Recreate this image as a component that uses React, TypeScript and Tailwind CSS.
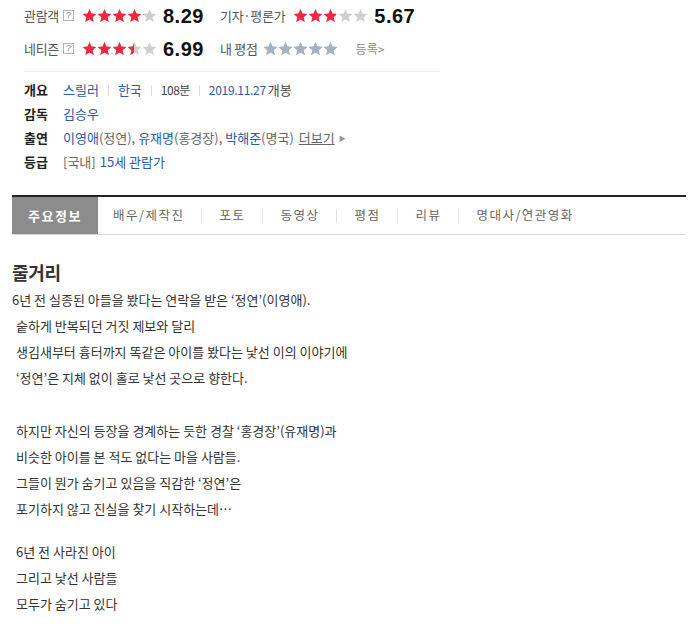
import React from "react";

const KR = { fontFamily: '"Noto Sans CJK KR", "Noto Sans", sans-serif' };

function Star({ fill, color, bg }: { fill: number; color: string; bg: string }) {
  return (
    <span className="relative inline-block w-[15px] h-[15px]">
      <svg viewBox="0 0 24 24" className="absolute inset-0 w-[15px] h-[15px]">
        <path d="M12 1.5l3.1 7.2 7.8.7-5.9 5.2 1.8 7.6L12 18.2l-6.8 4 1.8-7.6-5.9-5.2 7.8-.7z" fill={bg} />
      </svg>
      {fill > 0 && (
        <span className="absolute left-0 top-0 h-[15px] overflow-hidden" style={{ width: `${fill * 15}px` }}>
          <svg viewBox="0 0 24 24" className="w-[15px] h-[15px]">
            <path d="M12 1.5l3.1 7.2 7.8.7-5.9 5.2 1.8 7.6L12 18.2l-6.8 4 1.8-7.6-5.9-5.2 7.8-.7z" fill={color} />
          </svg>
        </span>
      )}
    </span>
  );
}

function Stars({ score, color = "#f2263c", bg = "#cfcfcf" }: { score: number; color?: string; bg?: string }) {
  const s = score / 2;
  return (
    <span className="flex items-center">
      {[0, 1, 2, 3, 4].map((i) => (
        <Star key={i} fill={Math.max(0, Math.min(1, s - i))} color={color} bg={bg} />
      ))}
    </span>
  );
}

function Help() {
  return (
    <span className="inline-flex items-center justify-center w-[11px] h-[11px] border border-[#b5b5b5] text-[9px] leading-none text-[#888] ml-[4px]" style={{ fontFamily: '"Liberation Sans", sans-serif' }}>
      ?
    </span>
  );
}

function Score({ v }: { v: string }) {
  return (
    <span className="text-[20px] font-bold text-[#111] tracking-[0.5px] ml-[6px] leading-none" style={{ fontFamily: '"Liberation Sans", Arial, sans-serif' }}>
      {v}
    </span>
  );
}

function Sep() {
  return <span className="inline-block w-px h-[11px] bg-[#dcdcdc] mx-[9px]" />;
}

const tabs = ["배우/제작진", "포토", "동영상", "평점", "리뷰", "명대사/연관영화"];

const para1 = [
  "6년 전 실종된 아들을 봤다는 연락을 받은 ‘정연’(이영애).",
  "숱하게 반복되던 거짓 제보와 달리",
  "생김새부터 흉터까지 똑같은 아이를 봤다는 낯선 이의 이야기에",
  "‘정연’은 지체 없이 홀로 낯선 곳으로 향한다.",
];
const para2 = [
  "하지만 자신의 등장을 경계하는 듯한 경찰 ‘홍경장’(유재명)과",
  "비슷한 아이를 본 적도 없다는 마을 사람들.",
  "그들이 뭔가 숨기고 있음을 직감한 ‘정연’은",
  "포기하지 않고 진실을 찾기 시작하는데…",
];
const para3 = ["6년 전 사라진 아이", "그리고 낯선 사람들", "모두가 숨기고 있다"];

export default function App() {
  return (
    <div className="w-[695px] h-[634px] bg-white overflow-hidden text-[#333]" style={KR}>
      {/* ratings */}
      <div className="pl-[24px] pt-[4px] w-[440px]">
        <div className="flex items-center h-[23px]">
          <div className="flex items-center w-[196px]">
            <span className="text-[13px] text-[#555] whitespace-nowrap tracking-[-0.3px]">관람객</span>
            <Help />
            <span className="ml-[8px]"><Stars score={8.29} /></span>
            <Score v="8.29" />
          </div>
          <div className="flex items-center">
            <span className="text-[13px] text-[#555] whitespace-nowrap tracking-[-0.3px]">기자·평론가</span>
            <span className="ml-[8px]"><Stars score={5.67} /></span>
            <Score v="5.67" />
          </div>
        </div>
        <div className="flex items-center h-[23px] mt-[10px]">
          <div className="flex items-center w-[196px]">
            <span className="text-[13px] text-[#555] whitespace-nowrap tracking-[-0.3px]">네티즌</span>
            <Help />
            <span className="ml-[8px]"><Stars score={6.99} /></span>
            <Score v="6.99" />
          </div>
          <div className="flex items-center">
            <span className="text-[13px] text-[#555] whitespace-nowrap tracking-[-0.3px]">내 평점</span>
            <span className="ml-[5px]"><Stars score={10} color="#a7b2c0" bg="#a7b2c0" /></span>
            <span className="ml-[18px] text-[12px] text-[#888] whitespace-nowrap">등록&gt;</span>
          </div>
        </div>
        <div className="h-px bg-[#ececec] mt-[11px]" />
      </div>

      {/* info */}
      <div className="pl-[24px] pt-[6px] text-[13px] leading-[24px] whitespace-nowrap">
        <div className="flex items-center">
          <span className="w-[39px] font-bold text-[#222]">개요</span>
          <span className="text-[#2a5aa8]">스릴러</span>
          <Sep />
          <span className="text-[#2a5aa8]">한국</span>
          <Sep />
          <span className="text-[#444] text-[12px] tracking-[-0.5px]">108분</span>
          <Sep />
          <span className="text-[#2a5aa8] text-[12px] tracking-[-0.3px]">2019.11.27</span>
          <span className="text-[#444] ml-[2px]">개봉</span>
        </div>
        <div className="flex items-center">
          <span className="w-[39px] font-bold text-[#222]">감독</span>
          <span className="text-[#2a5aa8]">김승우</span>
        </div>
        <div className="flex items-center">
          <span className="w-[39px] font-bold text-[#222]">출연</span>
          <span className="text-[#2a5aa8]">이영애</span>
          <span className="text-[#666]">(정연),&nbsp;</span>
          <span className="text-[#2a5aa8]">유재명</span>
          <span className="text-[#666]">(홍경장),&nbsp;</span>
          <span className="text-[#2a5aa8]">박해준</span>
          <span className="text-[#666]">(명국)&nbsp;</span>
          <span className="text-[#666] underline ml-[2px]">더보기</span>
          <span className="text-[#999] text-[7px] ml-[4px]">▶</span>
        </div>
        <div className="flex items-center">
          <span className="w-[39px] font-bold text-[#222]">등급</span>
          <span className="text-[#666]">[국내]</span>
          <span className="text-[#2a5aa8] ml-[4px]">15세 관람가</span>
        </div>
      </div>

      {/* tabs */}
      <div className="mx-[12px] mt-[21px] w-[674px] border-t-2 border-[#222] border-b border-b-[#d6d6d6]">
        <div className="flex items-center h-[37px]">
          <div className="h-full w-[86px] bg-[#8c8c8c] text-white font-bold text-[13px] tracking-[1.5px] flex items-center justify-center">
            주요정보
          </div>
          <div className="flex items-center text-[12.5px] text-[#666] tracking-[1.5px] whitespace-nowrap">
            {tabs.map((t, i) => (
              <React.Fragment key={t}>
                {i > 0 && <span className="inline-block w-px h-[14px] bg-[#e2e2e2]" />}
                <span className={i === 0 ? "pl-[15px] pr-[17px]" : "px-[17px]"}>{t}</span>
              </React.Fragment>
            ))}
          </div>
        </div>
      </div>

      {/* synopsis */}
      <div className="pl-[12px] pt-[25px]">
        <h3 className="text-[18px] font-bold text-[#333] leading-[24px] tracking-[-0.3px]">줄거리</h3>
        <div className="mt-[3px] text-[13px] text-[#333] leading-[26px]">
          {para1.map((l, i) => (
            <div key={l} className={i === 0 ? "" : "pl-[4px]"}>{l}</div>
          ))}
          <div className="h-[27px]" />
          {para2.map((l) => (
            <div key={l} className="pl-[4px]">{l}</div>
          ))}
          <div className="h-[17px]" />
          {para3.map((l) => (
            <div key={l} className="pl-[4px]">{l}</div>
          ))}
        </div>
      </div>
    </div>
  );
}
